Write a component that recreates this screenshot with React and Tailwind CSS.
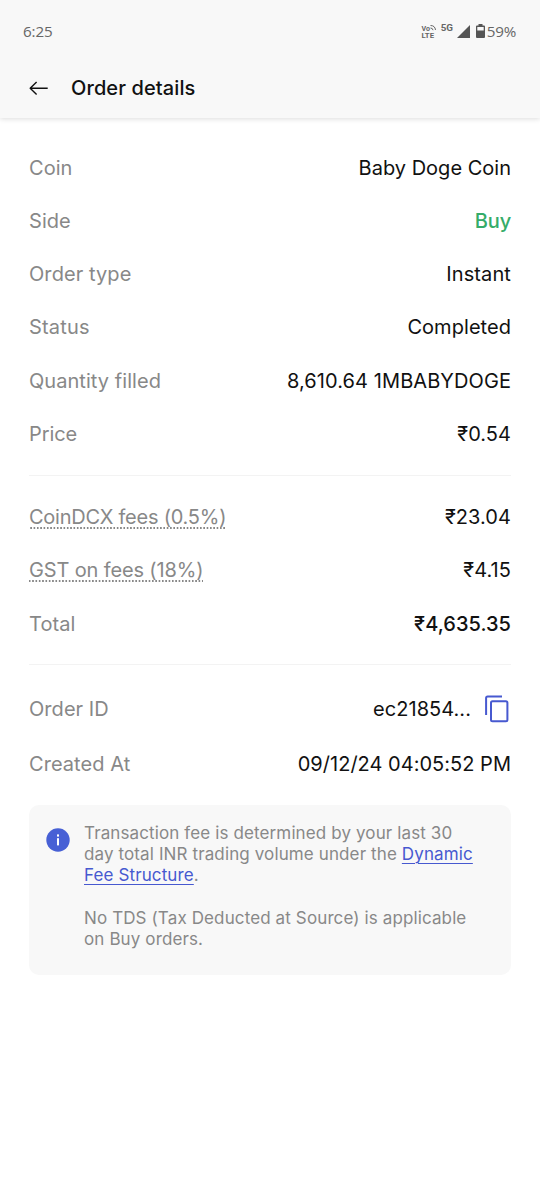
const Row = ({ label, value, dotted = false, className = "h-[53.25px]", labelClass = "", valueClass = "" }) => (
  <div className={`flex items-center justify-between ${className}`}>
    <span className={`text-[#888888] ${labelClass}`}>
      {dotted ? (
        <span className="block bg-[radial-gradient(circle,#888888_0.8px,transparent_1.1px)] bg-[length:3.33px_2px] bg-bottom bg-repeat-x leading-[24px]">
          {label}
        </span>
      ) : (
        label
      )}
    </span>
    <span className={`flex items-center ${valueClass}`}>{value}</span>
  </div>
);

const BackIcon = () => (
  <svg width="20" height="16" viewBox="0 0 20 16" fill="none" stroke="#111111" strokeWidth="1.4" strokeLinejoin="round">
    <path d="M18.7 8.3H1.5M7.6 2 1.2 8.3 7.6 14.6" />
  </svg>
);

const CopyIcon = () => (
  <svg width="24" height="28" viewBox="0 0 24 28" fill="none" stroke="#4759d0" strokeWidth="2">
    <path d="M1.1 20V3Q1.1 1.5 2.6 1.5H17" />
    <rect x="6" y="6.2" width="16.4" height="20" rx="1.5" />
  </svg>
);

const InfoIcon = () => (
  <svg width="24" height="24" viewBox="0 0 24 24">
    <circle cx="12" cy="12" r="11.7" fill="#4760d5" />
    <rect x="11" y="10.2" width="2" height="7.2" fill="#ffffff" />
    <rect x="11" y="6.4" width="2" height="2.2" fill="#ffffff" />
  </svg>
);

const VolteIcon = () => (
  <svg width="16" height="15" viewBox="0 0 16 15" fill="#666666" className="font-[Roboto,sans-serif] tracking-normal">
    <text x="0.5" y="6.5" fontSize="7.8" fontWeight="700" textLength="8.5" lengthAdjust="spacingAndGlyphs">Vo</text>
    <text x="0.5" y="14.3" fontSize="8" fontWeight="700" textLength="12.5" lengthAdjust="spacingAndGlyphs">LTE</text>
    <path d="M9.5 1.5Q14 1.5 14.5 6M9.5 4Q11.7 4 12 6.2" fill="none" stroke="#666666" strokeWidth="1" />
  </svg>
);

const StatusBar = () => (
  <div className="flex h-[63px] items-center justify-between pr-[24px] pl-[23px] font-['Open_Sans',sans-serif] text-[15.2px] text-[#666666]">
    <span className="tracking-[-0.1px]">6:25</span>
    <div className="flex items-center">
      <VolteIcon />
      <span className="mb-[7px] ml-[4px] w-[14px] font-[Roboto,sans-serif] text-[9.8px] leading-[12px] font-bold">5G</span>
      <svg width="13" height="13" viewBox="0 0 13 13" className="ml-[2px]">
        <path d="M13 0V13H0Z" fill="#555555" />
      </svg>
      <svg width="9" height="14" viewBox="0 0 9 14" className="mr-[2px] ml-[6px]">
        <path d="M2.5 0h4v1.5H8q1 0 1 1V13q0 1-1 1H1q-1 0-1-1V2.5q0-1 1-1h1.5ZM1.3 3v3.4h6.4V3Z" fill="#555555" fillRule="evenodd" />
      </svg>
      <span className="tracking-[-0.2px]">59%</span>
    </div>
  </div>
);

export default function App() {
  return (
    <div className="min-h-[1200px] w-[540px] bg-white font-[Inter,sans-serif] text-[20px] tracking-[0.05px] text-[#111111]">
      <header className="h-[118px] bg-[#f8f8f8] shadow-[0_1px_5px_rgba(0,0,0,0.14)]">
        <StatusBar />
        <div className="flex h-[50px] items-center pl-[29px]">
          <BackIcon />
          <h1 className="ml-[22px] font-medium tracking-[0.1px]">Order details</h1>
        </div>
      </header>

      <main className="px-[29px] pt-[23px]">
        <Row label="Coin" value="Baby Doge Coin" valueClass="tracking-[0.01px]" />
        <Row label="Side" value="Buy" valueClass="font-medium tracking-[-0.15px] text-[#35ac69]" />
        <Row label="Order type" value="Instant" labelClass="tracking-[0.08px]" valueClass="tracking-[0.1px]" />
        <Row label="Status" value="Completed" labelClass="tracking-[0.2px]" />
        <Row label="Quantity filled" value="8,610.64 1MBABYDOGE" valueClass="tracking-[0.08px]" />
        <Row label="Price" value="₹0.54" labelClass="tracking-[-0.1px]" />
        <hr className="mt-[14px] mb-[15px] border-[#f3f3f3]" />
        <Row label="CoinDCX fees (0.5%)" value="₹23.04" dotted labelClass="tracking-[-0.24px]" />
        <Row label="GST on fees (18%)" value="₹4.15" dotted labelClass="tracking-[-0.14px]" />
        <Row label="Total" value="₹4,635.35" valueClass="font-medium" />
        <hr className="mt-[14px] mb-[15px] border-[#f3f3f3]" />
        <Row
          className="h-[57px]"
          label="Order ID"
          value={
            <>
              <span className="mr-[14px]">ec21854...</span>
              <span className="mr-[2px]">
                <CopyIcon />
              </span>
            </>
          }
        />
        <Row label="Created At" value="09/12/24 04:05:52 PM" valueClass="tracking-[0.02px]" />

        {/* Fee note */}
        <div className="mt-[14px] flex h-[170px] rounded-[10px] bg-[#f8f8f8] pt-[18px] pl-[17px] text-[17px] leading-[21.4px] tracking-[0.12px] text-[#888888]">
          <span className="mt-[5px] mr-[14px] shrink-0">
            <InfoIcon />
          </span>
          <div>
            <p>
              Transaction fee is determined by your last 30
              <br />
              day total INR trading volume under the{" "}
              <a className="text-[#4759d0] underline decoration-1 underline-offset-[3px]">
                Dynamic
                <br />
                Fee Structure
              </a>
              .
            </p>
            <p className="mt-[21.3px]">
              No TDS (Tax Deducted at Source) is applicable
              <br />
              on Buy orders.
            </p>
          </div>
        </div>
      </main>
    </div>
  );
}
